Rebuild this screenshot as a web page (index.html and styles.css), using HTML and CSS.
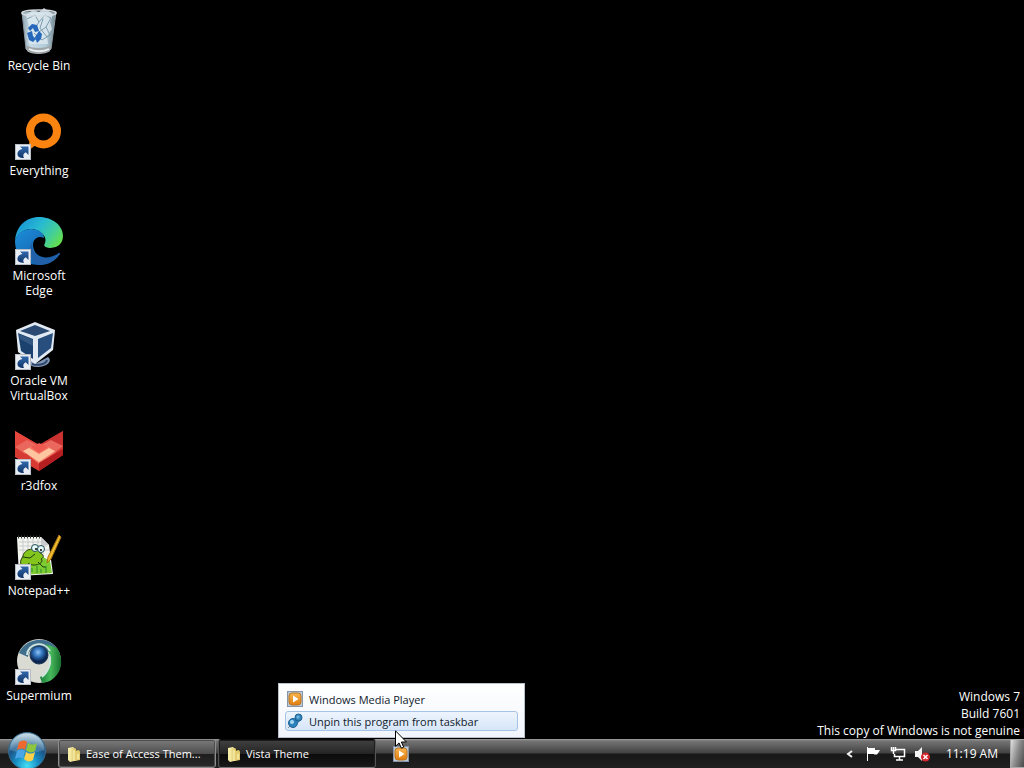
FILE: index.html
```html
<!DOCTYPE html>
<html lang="en">
<head>
<meta charset="utf-8">
<title>Desktop</title>
<link rel="stylesheet" href="styles.css">
</head>
<body>
<svg class="defs" aria-hidden="true">
  <defs>
    <linearGradient id="arrowBlue" x1="0" y1="0" x2="0" y2="1"><stop offset="0" stop-color="#2f68ad"/><stop offset="1" stop-color="#123466"/></linearGradient>
    <linearGradient id="folderGold" x1="0" y1="0" x2="1" y2="0"><stop offset="0" stop-color="#f3e9a0"/><stop offset="1" stop-color="#d9bf55"/></linearGradient>
    <linearGradient id="mediaOrange" x1="0" y1="0" x2="0" y2="1"><stop offset="0" stop-color="#f8b64e"/><stop offset="1" stop-color="#e07c10"/></linearGradient>
    <symbol id="shortcut" viewBox="0 0 16 16">
      <rect x=".5" y=".5" width="15" height="15" fill="#e9edf4" stroke="#b9bec6"/>
      <path d="M5 2.500h8.500v8.500l-2.700-2.700C8.500 9.500 7.500 11.500 9 14 4 14 2 12 2.500 9 3 6.500 5 5.500 7.500 5z" fill="url(#arrowBlue)"/>
    </symbol>
    <symbol id="folder" viewBox="0 0 16 16">
      <path d="M2 2l5-1 1 1v13l-4 1-2-2z" fill="#f6eda8"/>
      <path d="M5 2h4l1 1v12H4z" fill="url(#folderGold)"/>
      <path d="M9 5l4-1 1 2v8l-5 1z" fill="#e3cd6c"/>
      <path d="M8 4v11M12 8v5" stroke="#fff8cf" fill="none"/>
    </symbol>
    <symbol id="media" viewBox="0 0 16 16">
      <rect x=".5" y=".5" width="15" height="15" fill="#bccbdc" stroke="#8795a8"/>
      <rect x="2" y="2" width="12" height="12" rx="3" fill="url(#mediaOrange)" stroke="#b97522"/>
      <path d="M6 4.500v7L11.500 8z" fill="#fff"/>
    </symbol>
  </defs>
</svg>

<main class="desktop">
  <nav class="shortcuts" aria-label="Desktop icons">
    <button class="shortcut" type="button">
      <svg class="picture" viewBox="0 0 48 48" aria-hidden="true">
        <defs><linearGradient id="bin" x1="0" x2="1"><stop offset="0" stop-color="#8da3ae"/><stop offset=".25" stop-color="#c7dbe6"/><stop offset=".7" stop-color="#b2cbd9"/><stop offset="1" stop-color="#71858e"/></linearGradient></defs>
        <path d="M7 5l4 37c3 5 22 5 25 0l5-37z" fill="url(#bin)" stroke="#8c9ba3"/>
        <path d="M11 8l7-5 6 2 5-4 9 6-3 8 2 7-5 7 1 8H14l-2-9 2-8z" fill="#dbe8ef" opacity=".85"/>
        <path d="M12 12l8-4 4 7 6-7 6 3-5 9 4 8-8 5-8-7M24 15l-5 8M31 20l-7 5M28 12l-3 9 7 9" fill="none" stroke="#7d9cae"/>
        <ellipse cx="24" cy="6" rx="17" ry="3" fill="none" stroke="#d5dde1" stroke-width="1.500"/>
        <path d="M17 17l5 1 2 6-4 1-2-4-3 3-2-3zM12 26l5-2 1 5 3 3-3 3-4-2zM20 30l4-6 3 3-1 5-4 4z" fill="#2467bb"/>
        <path d="M11 38c5 4 20 4 25 0l-1 6c-4 4-19 4-23 0z" fill="#9fa6aa"/>
        <path d="M14 42c5 3 15 3 20 0" fill="none" stroke="#eceff0" stroke-width="2"/>
      </svg>
      <span class="label">Recycle Bin</span>
    </button>
    <button class="shortcut" type="button">
      <svg class="picture" viewBox="0 0 48 48" aria-hidden="true">
        <circle cx="28.500" cy="19" r="13.500" fill="none" stroke="#fb8410" stroke-width="8"/>
        <path d="M15 26l7 6-9 7z" fill="#fb8410"/>
        <use href="#shortcut" x="0" y="32" width="16" height="16"/>
      </svg>
      <span class="label">Everything</span>
    </button>
    <button class="shortcut" type="button">
      <svg class="picture" viewBox="0 0 48 48" aria-hidden="true">
        <defs>
          <linearGradient id="edgeTop" x1="0" y1=".2" x2="1" y2=".7"><stop offset="0" stop-color="#168fd4"/><stop offset=".45" stop-color="#28bad2"/><stop offset=".75" stop-color="#43ce9a"/><stop offset="1" stop-color="#64df4d"/></linearGradient>
          <linearGradient id="edgeLow" x1="0" y1="0" x2="1" y2="1"><stop offset="0" stop-color="#1c8edb"/><stop offset="1" stop-color="#145399"/></linearGradient>
        </defs>
        <path d="M0 24C1 9 11 0 24 0c14 0 24 9 24 19 0 8-6 12-12 12-6 0-8-2-6-5C33 19 24 12 16 12 8 12 2 18 0 24z" fill="url(#edgeTop)"/>
        <path d="M0 24c2-7 8-12 16-12 8 0 13 4 13 9-9-3-14 5-9 14 5 7 15 7 24 1 1 0 1 1 0 2-4 6-11 10-20 10C9 48 0 38 0 24z" fill="url(#edgeLow)"/>
        <path d="M19 22c-5 8 0 18 10 19 6 1 11-1 15-5 1 0 1 1 0 2-4 6-11 10-20 10-8-4-13-16-5-26z" fill="#2261aa"/>
        <path d="M29 27c-1 2 1 4 6 4 4 0 8-1 11-4 0 4-1 6-3 8-10 7-23 3-24-8-1-9 14-9 10 0z" fill="#000"/>
        <use href="#shortcut" x="0" y="32" width="16" height="16"/>
      </svg>
      <span class="label">Microsoft Edge</span>
    </button>
    <button class="shortcut" type="button">
      <svg class="picture" viewBox="0 0 48 48" aria-hidden="true">
        <path d="M16 38l6 3 11-6c5 4-1 10-11 10-4 0-6-1-8-3z" fill="#8096b8"/>
        <path d="M17 42c7 2 14 0 15-4" fill="none" stroke="#304668" stroke-width="2"/>
        <path d="M1 8L20 0l20 8-2 20-18 14L3 30z" fill="#e1eaf2"/>
        <path d="M5 9l15-6 15 6-15 5z" fill="#2b4a73"/>
        <path d="M3 11l15 6v20L6 29z" fill="#1b416f"/>
        <path d="M38 11l-15 6v19l13-10z" fill="#274e7c"/>
        <path d="M4 12l14 6v6L5 17z" fill="#43688f" opacity=".6"/>
        <use href="#shortcut" x="0" y="32" width="16" height="16"/>
      </svg>
      <span class="label">Oracle VM VirtualBox</span>
    </button>
    <button class="shortcut" type="button">
      <svg class="picture" viewBox="0 0 48 48" aria-hidden="true">
        <path d="M0 4l24 14L48 4v24L24 44 0 30z" fill="#d73a33"/>
        <path d="M0 4l24 14-12 9L0 20z" fill="#e5463e"/>
        <path d="M48 4L24 18l12 9 12-8z" fill="#c93230"/>
        <path d="M0 20l12-7 12 6-14 8zM48 19l-12-6-12 6 14 8z" fill="#e9675c"/>
        <path d="M8 24l8-5 8 5 9-5 8 6-17 12z" fill="#f47663"/>
        <path d="M8 24l6-3 10 6 10-6 6 3-16 11z" fill="#ffc5a0"/>
        <path d="M16 20l8-4 9 4-9 6z" fill="#ee5a50"/>
        <path d="M24 36l24-14v6L24 44z" fill="#b51f22"/>
        <use href="#shortcut" x="0" y="32" width="16" height="16"/>
      </svg>
      <span class="label">r3dfox</span>
    </button>
    <button class="shortcut" type="button">
      <svg class="picture" viewBox="0 0 48 48" aria-hidden="true">
        <path d="M2 5h24l8 8 4 29-34 2z" fill="#f4f5ef"/>
        <path d="M4 10h23M4 14h28M4 18h30M8 7v35M13 7v35M18 7v35M23 7v35M28 7v35" stroke="#c6cbce" fill="none"/>
        <path d="M26 5v9l8-1z" fill="#c8ccd0"/>
        <path d="M3 5h22" stroke="#373b38" stroke-width="3" stroke-dasharray="1 2"/>
        <path d="M6 28l7-3 5 3 10-3 7 4 2 12-31 2z" fill="#7ccc32"/>
        <path d="M8 24c1-7 13-10 17-3 3 1 5 4 1 6 4 4-6 8-12 5-5 4-10 1-8-4z" fill="#83c51d" stroke="#263c0a"/>
        <path d="M8 25l7 1 5-4M14 31l-3 5h5M23 30l5 5h3" fill="none" stroke="#1e3b0a"/>
        <circle cx="20" cy="16" r="3.500" fill="#e5f9fb" stroke="#234d55"/><circle cx="26" cy="17" r="3.500" fill="#e5f9fb" stroke="#234d55"/>
        <circle cx="21" cy="17" r="1"/><circle cx="26" cy="18" r="1"/>
        <path d="M17 36v4M22 34v7M26 37v4M31 34v7" stroke="#288a26"/>
        <path d="M44 3l2 2-10 22-4 4 1-6z" fill="#edb92d" stroke="#a67111"/>
        <use href="#shortcut" x="0" y="32" width="16" height="16"/>
      </svg>
      <span class="label">Notepad++</span>
    </button>
    <button class="shortcut" type="button">
      <svg class="picture" viewBox="0 0 48 48" aria-hidden="true">
        <defs><radialGradient id="orbBlue" cx=".45" cy=".35"><stop offset="0" stop-color="#8fc3f5"/><stop offset=".5" stop-color="#2f70b9"/><stop offset="1" stop-color="#0b264f"/></radialGradient>
        <linearGradient id="orbGreen" x1="0" x2="1"><stop offset="0" stop-color="#178139"/><stop offset=".5" stop-color="#48b85c"/><stop offset="1" stop-color="#16702d"/></linearGradient></defs>
        <circle cx="24" cy="24" r="22" fill="#dadbd3"/>
        <path d="M4 16C10 1 34-3 43 13L33 15C24 6 13 11 13 20z" fill="#406f8d"/>
        <path d="M31 7l11 4c10 15 1 34-15 35l-2-6c9-5 14-14 9-24z" fill="url(#orbGreen)"/>
        <path d="M12 18c1-12 17-15 23-4M34 17c3 9-1 18-7 23" fill="none" stroke="#d1e5df" stroke-width="2"/>
        <circle cx="24" cy="18" r="9" fill="url(#orbBlue)" stroke="#1d3755"/>
        <use href="#shortcut" x="0" y="32" width="16" height="16"/>
      </svg>
      <span class="label">Supermium</span>
    </button>
  </nav>
  <div class="watermark">
    <p>Windows 7</p>
    <p>Build 7601</p>
    <p>This copy of Windows is not genuine</p>
  </div>
</main>

<footer class="taskbar">
  <button class="start" type="button" aria-label="Start">
    <svg viewBox="0 0 40 40" aria-hidden="true">
      <defs><radialGradient id="startOrb" cx=".5" cy=".9" r=".9"><stop offset="0" stop-color="#45dff5"/><stop offset=".35" stop-color="#168dc3"/><stop offset=".65" stop-color="#1e5386"/><stop offset="1" stop-color="#9ebed0"/></radialGradient>
      <linearGradient id="startShine" x1="0" y1="0" x2="0" y2="1"><stop offset="0" stop-color="#d6e8ee" stop-opacity=".8"/><stop offset="1" stop-color="#82b1c9" stop-opacity=".25"/></linearGradient></defs>
      <circle cx="20" cy="20" r="18.500" fill="url(#startOrb)" stroke="#36698a"/>
      <path d="M3 19C3-3 37-3 37 19c-9 4-25 4-34 0z" fill="url(#startShine)"/>
      <path d="M12 11c3-2 6-2 8 0l-2 8c-2-2-5-2-8 0z" fill="#ed692d"/>
      <path d="M21 12c3 2 6 2 9 0l-2 8c-3 2-6 2-9-1z" fill="#8dc63f"/>
      <path d="M10 20c3-2 6-1 8 0l-2 8c-2-2-5-2-8 0z" fill="#4ba6e8"/>
      <path d="M19 21c3 2 6 2 9 0l-2 8c-3 2-6 2-9-1z" fill="#ffd14a"/>
    </svg>
  </button>
  <div class="tasks">
    <button class="task" type="button"><svg class="small-icon" aria-hidden="true"><use href="#folder"/></svg><span class="task-name">Ease of Access Them...</span></button>
    <button class="task active" type="button"><svg class="small-icon" aria-hidden="true"><use href="#folder"/></svg><span class="task-name">Vista Theme</span></button>
    <div class="pinned">
      <button class="pin" type="button" aria-label="Windows Media Player"><svg class="small-icon" aria-hidden="true"><use href="#media"/></svg></button>
      <div class="menu" role="menu">
        <button class="menu-item" type="button" role="menuitem"><svg class="small-icon" aria-hidden="true"><use href="#media"/></svg>Windows Media Player</button>
        <button class="menu-item hovered" type="button" role="menuitem">
          <svg class="small-icon" viewBox="0 0 16 16" aria-hidden="true"><path d="M5 11l-4 4" stroke="#78909f"/><circle cx="6" cy="10" r="4.500" fill="#2e83bd" stroke="#1c6290"/><path d="M6 7l4-4 4 4-4 4z" fill="#297bb4"/><circle cx="11.500" cy="4.500" r="3.500" fill="#3585bd" stroke="#1e608e"/><circle cx="5" cy="9" r="2" fill="#a7daf2"/><circle cx="11" cy="4" r="1.500" fill="#71b7dc"/></svg>Unpin this program from taskbar</button>
      </div>
      <svg class="cursor" viewBox="0 0 12 19" aria-hidden="true"><path d="M.5 .8v15.500l3.500-3.400 2.400 5.300 2.300-1-2.300-5.200h5z" fill="#fff" stroke="#000"/></svg>
    </div>
  </div>
  <div class="tray">
    <button class="tray-button" type="button" aria-label="Show hidden icons"><svg class="small-icon" viewBox="0 0 16 16"><path d="M10 5L6 8l4 3" fill="none" stroke="#f1f1f1" stroke-width="2"/></svg></button>
    <button class="tray-button" type="button" aria-label="Action Center"><svg class="small-icon" viewBox="0 0 16 16"><path d="M1.500 1v14" stroke="#fff"/><path d="M2 2h7v2h5l-1.500 2.500-1.500 2H8V8H2z" fill="#fff"/></svg></button>
    <button class="tray-button" type="button" aria-label="Network"><svg class="small-icon" viewBox="0 0 16 16"><path d="M6 3.500h8.500v7h-10V8M9.500 11v3M6 14h7M1.500 1v3.500h4V1M3.500 1v7" fill="none" stroke="#fff" stroke-width="1.500"/></svg></button>
    <button class="tray-button" type="button" aria-label="Volume muted"><svg class="small-icon" viewBox="0 0 16 16"><path d="M1 5h3l4-4v14l-4-4H1z" fill="#f3f3f3"/><circle cx="11.500" cy="11" r="4.500" fill="#d3252c"/><path d="M9.500 9l4 4m0-4l-4 4" stroke="#fff" stroke-width="1.500"/></svg></button>
    <time class="clock">11:19 AM</time>
    <button class="show-desktop" type="button" aria-label="Show desktop"></button>
  </div>
</footer>
</body>
</html>
```
FILE: styles.css
```css
* { box-sizing: border-box; }

body {
  margin: 0;
  min-height: 100vh;
  display: flex;
  flex-direction: column;
  background: #000;
  color: #fff;
  font: 12px/15px "Open Sans", "Noto Sans", sans-serif;
}

button {
  margin: 0;
  padding: 0;
  border: 0;
  background: none;
  color: inherit;
  font: inherit;
}

.defs { position: absolute; width: 0; height: 0; }

.desktop {
  flex: 1;
  display: flex;
  justify-content: space-between;
  align-items: flex-end;
}

.shortcuts {
  align-self: flex-start;
  display: grid;
  grid-auto-rows: 105px;
  width: 76px;
  padding-left: 2px;
}

.shortcut {
  display: flex;
  flex-direction: column;
  align-items: center;
  gap: 3px;
  padding-top: 7px;
}

.picture { width: 48px; height: 48px; flex: none; }
.label { text-align: center; }

.watermark {
  padding-right: 4px;
  text-align: right;
  line-height: 17px;
}

.watermark p { margin: 0; }

.taskbar {
  height: 29px;
  display: flex;
  background: linear-gradient(#a0a0a0 0, #747474 2px, #606060 7px, #414141 14px, #181818 15px, #202020 100%);
}

.start {
  flex: none;
  width: 58px;
  position: relative;
}

.start svg {
  position: absolute;
  left: 7px;
  bottom: -3px;
  width: 40px;
  height: 40px;
}

.tasks {
  flex: 1;
  min-width: 0;
  display: flex;
  gap: 2px;
  font-size: 11px;
}

.task {
  flex: 0 1 158px;
  min-width: 0;
  display: flex;
  align-items: center;
  gap: 4px;
  padding: 0 7px;
  border: 1px solid #8d8d8d;
  border-radius: 3px;
  box-shadow: inset 0 0 0 1px #4c4c4c;
  background: linear-gradient(#7b7b7b, #4e4e4e 50%, #1d1d1d 51%, #292929);
}

.task.active {
  border-color: #080808 #555 #777;
  box-shadow: inset 0 0 0 1px #1c1c1c;
  background: linear-gradient(#414141, #252525 50%, #0b0b0b 51%, #181818);
}

.task-name { white-space: nowrap; }

.small-icon { width: 16px; height: 16px; flex: none; }

.pinned { position: relative; display: flex; }

.pin {
  width: 46px;
  display: grid;
  place-items: center;
}

.menu {
  position: absolute;
  left: -100px;
  bottom: 30px;
  width: 247px;
  display: grid;
  gap: 2px;
  padding: 5px 6px 6px;
  border: 1px solid #b8c1ca;
  background: linear-gradient(#fff, #f1f5fb);
  color: #111a2c;
}

.menu-item {
  height: 20px;
  display: flex;
  align-items: center;
  gap: 6px;
  padding-left: 1px;
  border: 1px solid transparent;
  border-radius: 3px;
  white-space: nowrap;
}

.menu-item.hovered {
  border-color: #a5c3e5;
  background: linear-gradient(#edf4fd, #d7e6f8);
}

.cursor {
  position: absolute;
  left: 17px;
  top: -9px;
  width: 12px;
  height: 19px;
}

.tray {
  display: flex;
  align-items: center;
  gap: 8px;
}

.tray-button { display: flex; }
.clock { margin: 0 4px 0 8px; white-space: nowrap; }

.show-desktop {
  align-self: stretch;
  width: 14px;
  border: 1px solid #aaa;
  border-right: 0;
  background: linear-gradient(105deg, #e1e1e1, #898989 50%, #4a4a4a);
}
```
